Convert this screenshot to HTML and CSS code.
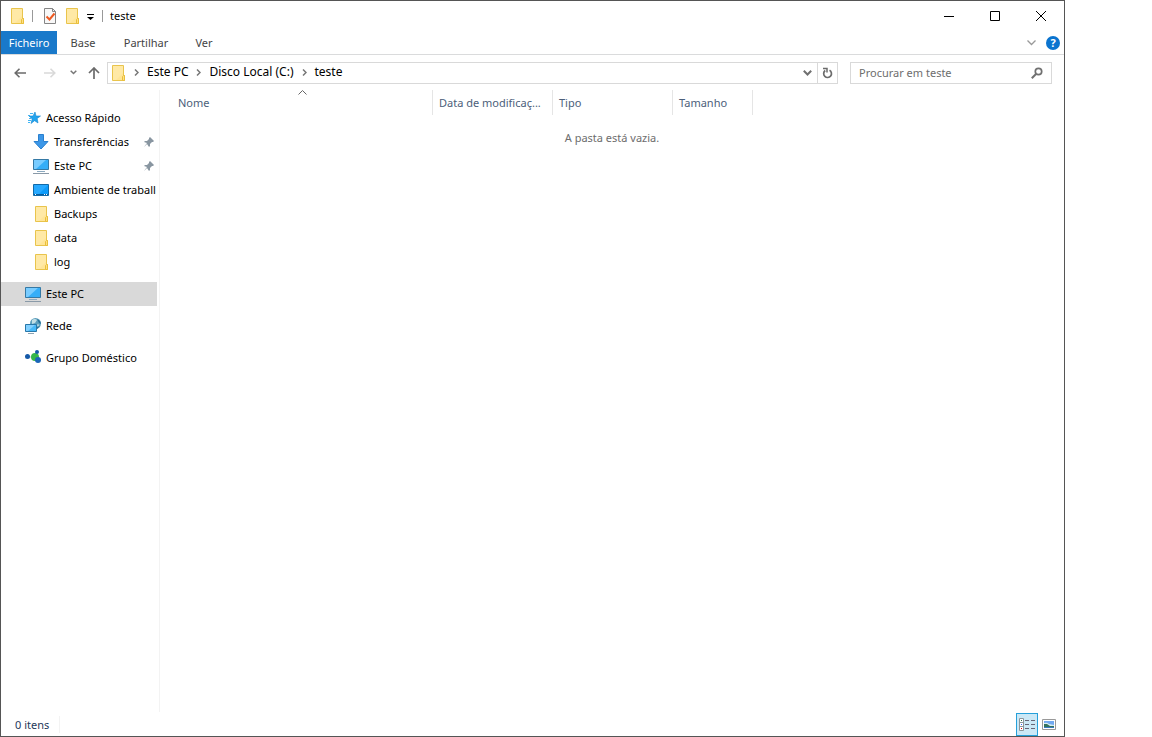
FILE: index.html
```html
<!DOCTYPE html>
<html lang="pt">
<head>
<meta charset="utf-8">
<title>teste</title>
<link rel="stylesheet" href="styles.css">
</head>
<body>
<svg class="sprite" aria-hidden="true">
  <symbol id="folder" viewBox="0 0 16 16">
    <path d="M2.5.5h11v10h1v5h-12z" fill="#ffe597" stroke="#e9c44c"/>
    <path d="M3 1h10v7L6 15H3z" fill="#ffe9a6"/>
    <path d="M12.5 15.5v-4l1-1h1v5z" fill="#ffe083" stroke="#e9bf3c"/>
  </symbol>
  <symbol id="computer" viewBox="0 0 16 16">
    <path d="M.5 1.5h15v10H.5z" fill="#35aef8" stroke="#3579a5"/>
    <path d="M1 2h12L3 11H1z" fill="#79ccff"/>
    <path d="M4 13h8v1H4z" fill="#8ba9bf"/>
    <path d="M0 15h16v1H0z" fill="#8a9aa8"/>
  </symbol>
  <symbol id="pin" viewBox="0 0 10 10">
    <path d="M6 0l4 4-1 1H8L6 7v2L5 10 3 7 0 10 3 6 0 5l1-1h2l2-2V1z" fill="#8996a1"/>
  </symbol>
  <symbol id="crumb" viewBox="0 0 5 7">
    <path d="M1 .5l3 3-3 3" fill="none" stroke="#777" stroke-width="1.5"/>
  </symbol>
</svg>

<div class="window">
  <header class="titlebar">
    <svg class="icon"><use href="#folder"/></svg>
    <span class="separator"></span>
    <button class="quick quick-check" aria-label="Propriedades">
      <svg class="icon" viewBox="0 0 16 16"><path d="M2.5.5h8l3 3v12h-11z" fill="#f8f8f8" stroke="#858585"/><path d="M10.500.5v3h3" fill="none" stroke="#858585"/><path d="M4.500 8.500l3 3 5-6" fill="none" stroke="#ed5a22" stroke-width="2"/></svg>
    </button>
    <button class="quick quick-folder" aria-label="Nova pasta"><svg class="icon"><use href="#folder"/></svg></button>
    <button class="quick quick-more" aria-label="Personalizar"><svg width="7" height="6" viewBox="0 0 7 6"><path d="M0 0h7v1H0zM0 3h7L3.500 6z"/></svg></button>
    <span class="separator"></span>
    <h1 class="title">teste</h1>
    <div class="captions">
      <button class="caption" aria-label="Minimizar"><svg width="10" height="10" viewBox="0 0 10 10"><path d="M0 5h10v1H0z"/></svg></button>
      <button class="caption" aria-label="Maximizar"><svg width="10" height="10" viewBox="0 0 10 10"><path d="M.5.5h9v9h-9z" fill="none" stroke="#000"/></svg></button>
      <button class="caption" aria-label="Fechar"><svg width="10" height="10" viewBox="0 0 10 10"><path d="M0 0l10 10M10 0L0 10" stroke="#000"/></svg></button>
    </div>
  </header>

  <nav class="ribbon">
    <button class="tab tab-file">Ficheiro</button>
    <button class="tab tab-base">Base</button>
    <button class="tab tab-share">Partilhar</button>
    <button class="tab tab-view">Ver</button>
    <div class="ribbon-tools">
      <button aria-label="Expandir friso"><svg width="9" height="6" viewBox="0 0 9 6"><path d="M.5.5l4 4 4-4" fill="none" stroke="#999" stroke-width="1.300"/></svg></button>
      <button class="help" aria-label="Ajuda">?</button>
    </div>
  </nav>

  <div class="navigation">
    <div class="arrows">
      <button aria-label="Anterior"><svg width="12" height="10" viewBox="0 0 12 10"><path d="M12 5H1M5.500.7L1.200 5l4.300 4.300" fill="none" stroke="#6b6b6b" stroke-width="1.600"/></svg></button>
      <button aria-label="Seguinte"><svg width="12" height="10" viewBox="0 0 12 10"><path d="M0 5h11M6.500.7L10.800 5 6.500 9.300" fill="none" stroke="#d9d9d9" stroke-width="1.600"/></svg></button>
      <button aria-label="Recentes"><svg width="7" height="5" viewBox="0 0 7 5"><path d="M.7.7l2.800 2.800L6.300.7" fill="none" stroke="#777" stroke-width="1.500"/></svg></button>
      <button aria-label="Acima"><svg width="12" height="12" viewBox="0 0 12 12"><path d="M6 12V1M1 6l5-5 5 5" fill="none" stroke="#6b6b6b" stroke-width="1.700"/></svg></button>
    </div>
    <div class="address">
      <svg class="icon"><use href="#folder"/></svg>
      <svg class="crumb-mark"><use href="#crumb"/></svg>
      <button class="crumb">Este PC</button>
      <svg class="crumb-mark"><use href="#crumb"/></svg>
      <button class="crumb">Disco Local (C:)</button>
      <svg class="crumb-mark"><use href="#crumb"/></svg>
      <button class="crumb">teste</button>
      <button class="history" aria-label="Localizações anteriores"><svg width="9" height="6" viewBox="0 0 9 6"><path d="M.8.8l3.700 3.700L8.200.8" fill="none" stroke="#707070" stroke-width="2"/></svg></button>
      <button class="refresh" aria-label="Atualizar"><svg width="11" height="12" viewBox="0 0 11 12"><path d="M7.500 3.200a3.900 3.900 0 1 1-4.300.3" fill="none" stroke="#6b6b6b" stroke-width="1.700"/><path d="M1 1.500h4v4" fill="none" stroke="#6b6b6b" stroke-width="1.500"/></svg></button>
    </div>
    <form class="search">
      <input type="text" placeholder="Procurar em teste" aria-label="Procurar em teste">
      <button type="button" aria-label="Procurar"><svg width="12" height="12" viewBox="0 0 12 12"><circle cx="7.500" cy="4.500" r="3.200" fill="none" stroke="#707070" stroke-width="1.700"/><path d="M5 7L.8 11.200" stroke="#707070" stroke-width="2"/></svg></button>
    </form>
  </div>

  <div class="content">
    <nav class="sidebar">
      <ul class="tree">
        <li><a href="#" class="item"><svg class="icon" viewBox="0 0 16 16"><path d="M10 2l1 4h4.500l-3.300 2.500.8 4.500-3.400-2.300L6 13.500l1.200-4.600L4 6h4z" fill="#22a4ee" stroke="#1787d0" stroke-width=".6"/><path d="M5 3.500h3M3 5.500h2M4 8.500h2M3 10.500h3M3 12.500h2" stroke="#44b5f3"/></svg><span>Acesso Rápido</span></a>
          <ul class="branch">
            <li><a href="#" class="item"><svg class="icon" viewBox="0 0 16 16"><path d="M5.500.500h5v7h4.500l-7 7.500-7-7.500h4.500z" fill="#3c97e8" stroke="#2a80cf"/></svg><span>Transferências</span><svg class="pin"><use href="#pin"/></svg></a></li>
            <li><a href="#" class="item"><svg class="icon"><use href="#computer"/></svg><span>Este PC</span><svg class="pin"><use href="#pin"/></svg></a></li>
            <li><a href="#" class="item"><svg class="icon" viewBox="0 0 16 16"><path d="M.5 2.500h15v11H.5z" fill="#0d9bfa" stroke="#126aa8"/><path d="M1 3h14L6 12H1z" fill="#27a9ff"/><path d="M1 12h14v1H1z" fill="#075da0"/><path d="M2 12h1v1H2zM11 12h1v1h-1zM13 12h1v1h-1z" fill="#fff"/></svg><span>Ambiente de traball</span></a></li>
            <li><a href="#" class="item"><svg class="icon"><use href="#folder"/></svg><span>Backups</span></a></li>
            <li><a href="#" class="item"><svg class="icon"><use href="#folder"/></svg><span>data</span></a></li>
            <li><a href="#" class="item"><svg class="icon"><use href="#folder"/></svg><span>log</span></a></li>
          </ul>
        </li>
        <li><a href="#" class="item selected"><svg class="icon"><use href="#computer"/></svg><span>Este PC</span></a></li>
        <li><a href="#" class="item"><svg class="icon" viewBox="0 0 16 16"><circle cx="10.500" cy="5.500" r="5.500" fill="#5d9fbd"/><path d="M7 2q3-2 5 0l-2 3-3 1zM13 6l1 1-1 2-1-2z" fill="#c2dfe5"/><path d="M12 1q4 2 4 5l-2-1zM12 9l3-1-3 3z" fill="#276f96"/><path d="M.500 6.500h11v7H.500z" fill="#48b9f8" stroke="#2877a9"/><path d="M1 7h9l-7 6H1z" fill="#82d0ff"/><path d="M3 15h6v1H3z" fill="#8ba3b3"/></svg><span>Rede</span></a></li>
        <li><a href="#" class="item"><svg class="icon" viewBox="0 0 16 16"><path d="M3 7h7l2-4M10 7l3 3" fill="none" stroke="#a9c9d8"/><circle cx="10" cy="7" r="4" fill="#36b64a"/><circle cx="2.500" cy="6.500" r="2.500" fill="#1559a8"/><circle cx="12" cy="2" r="2" fill="#1559a8"/><circle cx="13" cy="10" r="3" fill="#1b66b7"/></svg><span>Grupo Doméstico</span></a></li>
      </ul>
    </nav>

    <main class="files">
      <table>
        <thead>
          <tr>
            <th class="col-name">Nome<svg class="sort" width="9" height="5" viewBox="0 0 9 5"><path d="M.500 4.500l4-4 4 4" fill="none" stroke="#666"/></svg></th>
            <th class="col-date">Data de modificaç...</th>
            <th class="col-type">Tipo</th>
            <th class="col-size">Tamanho</th>
            <td class="col-rest"></td>
          </tr>
        </thead>
        <tbody><tr><td class="empty" colspan="5">A pasta está vazia.</td></tr></tbody>
      </table>
    </main>
  </div>

  <footer class="status">
    <span class="count">0 itens</span>
    <div class="views">
      <button class="view active" aria-label="Detalhes"><svg width="16" height="13" viewBox="0 0 16 13"><path d="M.5.5h4v12h-4zM.5 4.500h4M.5 8.500h4" fill="#fff" stroke="#8c969b"/><path d="M6 2h4v1H6zM12 2h4v1h-4zM6 6h4v1H6zM12 6h4v1h-4zM6 10h4v1H6zM12 10h4v1h-4z" fill="#667"/><path d="M2 2h1v1H2z" fill="#286b3b"/><path d="M2 6h1v1H2z" fill="#36f"/><path d="M2 10h1v1H2z" fill="#d00"/></svg></button>
      <button class="view" aria-label="Ícones grandes"><svg width="14" height="11" viewBox="0 0 14 11"><path d="M.5.5h13v10H.5z" fill="#fff" stroke="#999"/><path d="M2 2h10v7H2z" fill="#72aaf1"/><path d="M2 4q3-1 5 1l5 1v1H2z" fill="#d8edf1"/><path d="M2 5l3 0 3 2h4v1H2z" fill="#34735f"/><path d="M2 8h10v1H2z" fill="#397ac0"/></svg></button>
    </div>
  </footer>
</div>
</body>
</html>
```
FILE: styles.css
```css
* {
  box-sizing: border-box;
}

body {
  margin: 0;
  padding-right: 87px;
  background: #fff;
  color: #000;
  font: 11px/16px "Noto Sans", "Open Sans", sans-serif;
}

button,
input {
  margin: 0;
  padding: 0;
  border: 0;
  background: none;
  color: inherit;
  font: inherit;
}

svg {
  display: block;
  flex: none;
}

ul {
  margin: 0;
  padding: 0;
  list-style: none;
}

.sprite {
  display: none;
}

.icon {
  width: 16px;
  height: 16px;
}

.window {
  display: flex;
  flex-direction: column;
  min-height: 100vh;
  border: 1px solid #555;
}

/* Title bar */
.titlebar {
  display: flex;
  align-items: center;
  height: 30px;
  padding-left: 8px;
}

.separator {
  width: 1px;
  height: 12px;
  margin-left: 7px;
  background: #999;
}

.quick-check {
  margin-left: 9px;
}

.quick-folder {
  margin-left: 6px;
}

.quick-more {
  margin: 2px 1px 0 7px;
}

.title {
  margin: 0 0 0 7px;
  font-size: 11px;
  font-weight: 400;
}

.captions {
  display: flex;
  height: 29px;
  margin-left: auto;
}

.caption {
  display: flex;
  align-items: center;
  justify-content: center;
  width: 46px;
}

/* Ribbon */
.ribbon {
  display: flex;
  height: 24px;
  border-bottom: 1px solid #dadbdc;
  color: #444;
}

.tab {
  padding-top: 1px;
}

.tab-file {
  width: 56px;
  background: #1979ca;
  color: #fff;
}

.tab-base {
  width: 52px;
}

.tab-share {
  width: 74px;
}

.tab-view {
  width: 42px;
}

.ribbon-tools {
  display: flex;
  align-items: center;
  gap: 10px;
  margin-left: auto;
  padding-right: 4px;
}

.help {
  width: 14px;
  height: 14px;
  border-radius: 50%;
  background: #0b74cf;
  color: #fff;
  font-weight: 700;
  line-height: 14px;
}

/* Navigation row */
.navigation {
  display: flex;
  align-items: center;
  height: 35px;
  padding-right: 12px;
}

.arrows {
  display: flex;
  align-items: center;
  width: 106px;
  padding-left: 13px;
}

.arrows button:nth-child(2) {
  margin-left: 18px;
}

.arrows button:nth-child(3) {
  margin-left: 14px;
}

.arrows button:nth-child(4) {
  margin-left: 11px;
}

.address {
  display: flex;
  flex: 1;
  align-items: center;
  height: 22px;
  padding-left: 2px;
  border: 1px solid #d9d9d9;
  font-size: 12px;
}

.crumb {
  padding-bottom: 2px;
}

.crumb-mark {
  width: 5px;
  height: 7px;
  margin: 0 8px;
}

.history {
  margin-right: 5px;
  margin-left: auto;
}

.refresh {
  display: flex;
  align-items: center;
  align-self: stretch;
  justify-content: center;
  width: 20px;
  border-left: 1px solid #d9d9d9;
}

.search {
  display: flex;
  align-items: center;
  width: 202px;
  height: 22px;
  margin-left: 12px;
  padding: 0 8px;
  border: 1px solid #d9d9d9;
}

.search input {
  flex: 1;
  min-width: 0;
  outline: 0;
}

.search input::placeholder {
  color: #6d6d6d;
  opacity: 1;
}

/* Content */
.content {
  display: flex;
  flex: 1;
}

.sidebar {
  width: 159px;
  padding: 16px 2px 0 0;
  border-right: 1px solid #f3f3f3;
}

.tree {
  display: grid;
  grid-template-columns: minmax(0, 1fr);
  gap: 8px;
}

.item {
  display: flex;
  align-items: center;
  gap: 5px;
  height: 24px;
  padding-left: 24px;
  color: #000;
  text-decoration: none;
  white-space: nowrap;
}

.branch .item {
  padding-left: 32px;
}

.selected {
  background: #d9d9d9;
}

.pin {
  width: 10px;
  height: 10px;
  margin-right: 3px;
  margin-left: auto;
}

.files {
  flex: 1;
  min-width: 0;
}

.files table {
  width: 100%;
  border-spacing: 0;
  table-layout: fixed;
}

.files th {
  position: relative;
  height: 25px;
  padding: 0 6px;
  border-right: 1px solid #e5e5e5;
  color: #4c607a;
  font-weight: 400;
  text-align: left;
  white-space: nowrap;
}

.files .col-name {
  width: 273px;
  padding-left: 18px;
}

.col-date,
.col-type {
  width: 120px;
}

.col-size {
  width: 80px;
}

.sort {
  position: absolute;
  top: 0;
  left: 138px;
}

.empty {
  padding: 15px 0;
  color: #6d6d6d;
  text-align: center;
}

/* Status bar */
.status {
  display: flex;
  align-items: center;
  height: 24px;
  padding-left: 14px;
  color: #1e395b;
}

.count {
  padding: 1px 10px 0 0;
  border-right: 1px solid #f3f3f3;
}

.views {
  display: flex;
  margin-left: auto;
  padding-right: 4px;
}

.view {
  display: flex;
  align-items: center;
  justify-content: center;
  width: 22px;
  height: 23px;
}

.active {
  border: 1px solid #26a0da;
  background: #cbe8f6;
}
```
